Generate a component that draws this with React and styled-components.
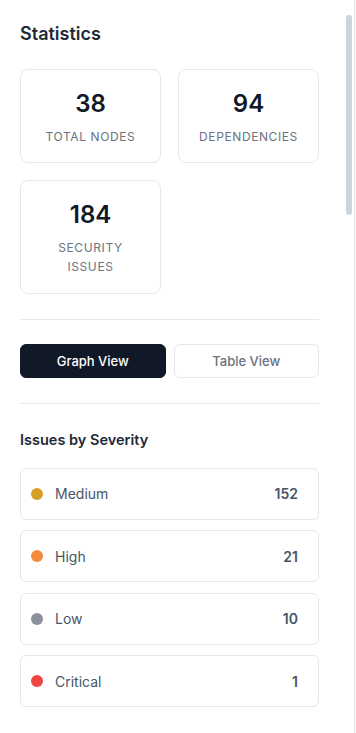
import styled, { createGlobalStyle } from "styled-components";

const GlobalStyle = createGlobalStyle`
  html, body {
    margin: 0;
    padding: 0;
    background: #f9fafb;
  }
  body {
    font-family: Inter, "Noto Sans", "Liberation Sans", sans-serif;
    -webkit-font-smoothing: antialiased;
  }
`;

const stats = [
  { value: 38, label: "Total Nodes" },
  { value: 94, label: "Dependencies" },
  { value: 184, label: "Security Issues" },
];

const severities = [
  { name: "Medium", count: 152, color: "#d69e24" },
  { name: "High", count: 21, color: "#f28b3d" },
  { name: "Low", count: 10, color: "#8b929d" },
  { name: "Critical", count: 1, color: "#f04545" },
];

export default function App() {
  return (
    <>
      <GlobalStyle />
      <Sidebar>
        <Content>
          <Title>Statistics</Title>
          <StatGrid>
            {stats.map((s) => (
              <StatCard key={s.label}>
                <StatValue>{s.value}</StatValue>
                <StatLabel>{s.label}</StatLabel>
              </StatCard>
            ))}
          </StatGrid>
          <Divider />
          <ViewToggle>
            <ToggleButton $active>Graph View</ToggleButton>
            <ToggleButton>Table View</ToggleButton>
          </ViewToggle>
          <Divider />
          <SectionTitle>Issues by Severity</SectionTitle>
          <SeverityList>
            {severities.map((s) => (
              <SeverityRow key={s.name}>
                <Dot $color={s.color} />
                <SeverityName>{s.name}</SeverityName>
                <SeverityCount>{s.count}</SeverityCount>
              </SeverityRow>
            ))}
          </SeverityList>
        </Content>
        <ScrollThumb />
      </Sidebar>
    </>
  );
}

const Sidebar = styled.aside`
  position: relative;
  width: 355px;
  height: 100vh;
  box-sizing: border-box;
  background: #ffffff;
  border-right: 1px solid #e5e7eb;
  overflow: hidden;
`;

/* scroll indicator sitting over the panel's right edge */
const ScrollThumb = styled.div`
  position: absolute;
  top: 15px;
  right: 2px;
  width: 6px;
  height: 200px;
  border-radius: 3px;
  background: #cbd5e1;
`;

const Content = styled.div`
  box-sizing: border-box;
  width: 319px;
  padding: 20px 0 20px 20px;
  display: flex;
  flex-direction: column;
`;

const Title = styled.h2`
  margin: 0 0 21px;
  font-size: 18px;
  line-height: 28px;
  font-weight: 600;
  color: #1f2937;
`;

const StatGrid = styled.div`
  display: grid;
  grid-template-columns: 141px 141px;
  column-gap: 17px;
  row-gap: 17px;
  align-items: start;
`;

const StatCard = styled.div`
  border: 1px solid #e5e7eb;
  border-radius: 8px;
  padding: 16px;
  text-align: center;
`;

const StatValue = styled.div`
  font-size: 24px;
  line-height: 36px;
  font-weight: 600;
  color: #111827;
`;

const StatLabel = styled.div`
  margin-top: 5px;
  font-size: 12px;
  line-height: 19.2px;
  letter-spacing: 0.6px;
  text-transform: uppercase;
  color: #6b7280;
`;

const Divider = styled.hr`
  margin: 25px 0 24px;
  border: 0;
  border-top: 1px solid #e5e7eb;
  width: 299px;
`;

const ViewToggle = styled.div`
  display: flex;
  gap: 8px;
  width: 299px;
`;

const ToggleButton = styled.button`
  flex: 1;
  height: 34px;
  border-radius: 6px;
  font-family: inherit;
  font-size: 13px;
  font-weight: 500;
  cursor: pointer;
  border: 1px solid ${(p) => (p.$active ? "#111827" : "#e5e7eb")};
  background: ${(p) => (p.$active ? "#111827" : "#ffffff")};
  color: ${(p) => (p.$active ? "#ffffff" : "#6b7280")};
`;

const SectionTitle = styled.h3`
  margin: 0 0 16px;
  font-size: 14.5px;
  line-height: 24px;
  font-weight: 600;
  color: #1f2937;
`;

const SeverityList = styled.div`
  display: flex;
  flex-direction: column;
  gap: 10.5px;
  width: 299px;
`;

const SeverityRow = styled.div`
  display: flex;
  align-items: center;
  height: 52px;
  box-sizing: border-box;
  padding: 0 20px 0 10px;
  border: 1px solid #e5e7eb;
  border-radius: 6px;
`;

const Dot = styled.span`
  width: 12px;
  height: 12px;
  border-radius: 50%;
  background: ${(p) => p.$color};
  flex-shrink: 0;
`;

const SeverityName = styled.span`
  flex: 1;
  margin-left: 12px;
  font-size: 14px;
  color: #475569;
`;

const SeverityCount = styled.span`
  font-size: 14px;
  font-weight: 600;
  color: #475569;
`;
